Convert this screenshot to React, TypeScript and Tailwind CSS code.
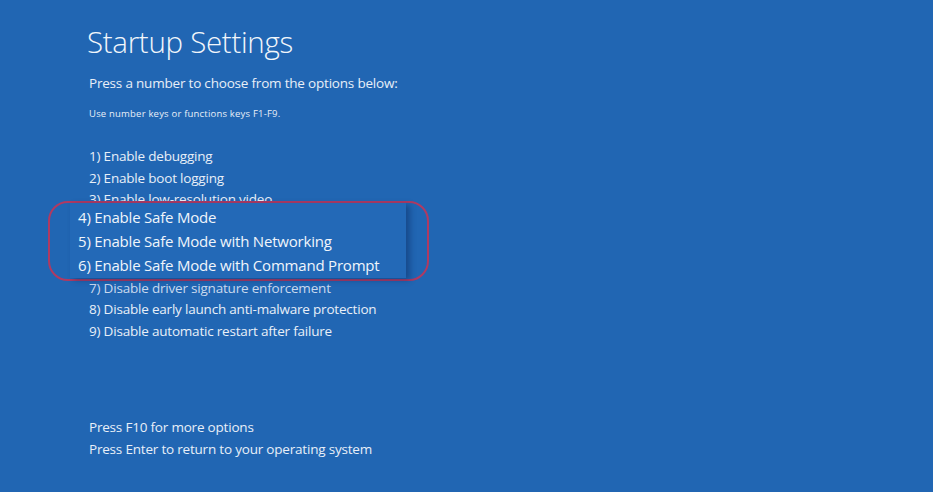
import React from "react"

const top = ["1) Enable debugging", "2) Enable boot logging", "3) Enable low-resolution video"]
const safe = ["4) Enable Safe Mode", "5) Enable Safe Mode with Networking", "6) Enable Safe Mode with Command Prompt"]
const bottom = ["7) Disable driver signature enforcement", "8) Disable early launch anti-malware protection", "9) Disable automatic restart after failure"]

export default function App() {
    return (
        <div className="min-h-screen w-full bg-[#2166b3] text-[#e8eff8] font-['Open_Sans',sans-serif] pl-[87px] pt-[24px]">
            <h1 className="text-[29.5px] leading-[36px] font-light tracking-[-0.3px] text-[#f2f6fb]">Startup Settings</h1>

            <div className="pl-[2px]">
                <p className="mt-[13px] text-[13.5px] leading-[20px] tracking-[-0.2px]">Press a number to choose from the options below:</p>
                <p className="mt-[14px] text-[9.5px] leading-[14px] tracking-[0.2px]">Use number keys or functions keys F1-F9.</p>

                <ul className="mt-[25px] text-[13.5px] leading-[21.5px] tracking-[-0.2px]">
                    {top.map((item) => (
                        <li key={item}>{item}</li>
                    ))}
                </ul>

                <div className="relative z-10 -mt-[10px] -ml-[41px] w-[381px] h-[80px] rounded-[20px] border-2 border-[#b03a62] bg-[#2166b3] pl-[20px]">
                    <ul className="w-[336px] h-[75px] bg-[#2369b7] pl-[8px] pt-[2px] text-[15px] leading-[24px] tracking-[-0.2px] text-[#f0f5fb] shadow-[4px_2px_6px_rgba(10,40,90,0.45)]">
                        {safe.map((item) => (
                            <li key={item}>{item}</li>
                        ))}
                    </ul>
                </div>

                <ul className="-mt-[3px] text-[13.5px] leading-[21.5px] tracking-[-0.2px]">
                    {bottom.map((item, i) => (
                        <li key={item} className={i === 0 ? "text-[#c9d9ee]" : ""}>{item}</li>
                    ))}
                </ul>

                <div className="mt-[74px] text-[13.5px] leading-[22px] tracking-[-0.2px]">
                    <p>Press F10 for more options</p>
                    <p>Press Enter to return to your operating system</p>
                </div>
            </div>
        </div>
    )
}
